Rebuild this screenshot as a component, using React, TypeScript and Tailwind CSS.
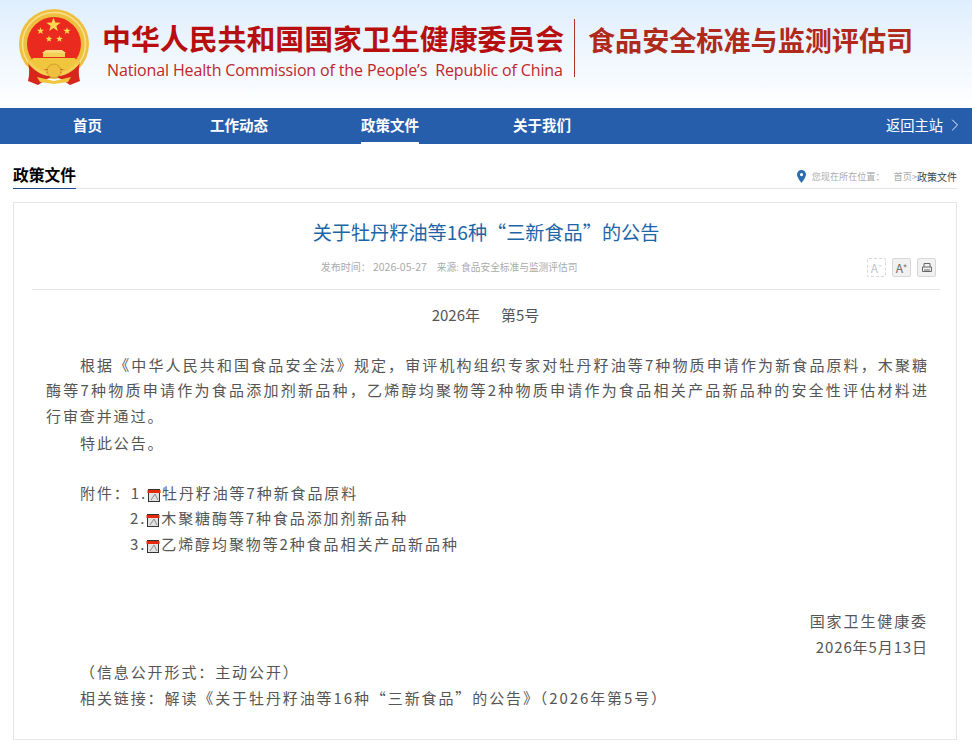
import { ChevronRight } from 'lucide-react'

const cjk = '[font-family:"Noto_Sans_CJK_SC","Liberation_Sans",sans-serif]'

const navItems = [
  { label: '首页', className: 'w-[29px]' },
  { label: '工作动态', className: 'ml-[108px] w-[58px]' },
  { label: '政策文件', className: 'ml-[93px] w-[58px]', active: true },
  { label: '关于我们', className: 'ml-[94px] w-[58px]' },
]

function Star({ cx, cy, r }: { cx: number; cy: number; r: number }) {
  const pts = Array.from({ length: 10 }, (_, i) => {
    const a = -Math.PI / 2 + (i * Math.PI) / 5
    const d = i % 2 === 0 ? r : r * 0.4
    return `${cx + d * Math.cos(a)},${cy + d * Math.sin(a)}`
  }).join(' ')
  return <polygon points={pts} fill="#f8d94f" />
}

// coordinates are page pixels, hence the viewBox offset
function Emblem() {
  return (
    <svg width="72" height="78" viewBox="18 9 72 78" className="shrink-0">
      <circle cx="54" cy="44" r="35" fill="#efc040" />
      <circle cx="54" cy="44" r="31.5" fill="none" stroke="#f9e08a" strokeWidth="1.5" />
      <path d="M28 62 C30 70 29 77 28 81 L38 85 L47 79 L54 76 L61 79 L70 85 L80 81 C79 77 78 70 80 62 L66 72 H42 Z" fill="#d9261c" />
      <circle cx="54" cy="44" r="27" fill="#ea2a1e" />
      <Star cx={53.5} cy={25} r={7.5} />
      <Star cx={40.5} cy={31} r={3.8} />
      <Star cx={67} cy={31} r={3.8} />
      <Star cx={49} cy={39} r={3.5} />
      <Star cx={59.5} cy={39} r={3.5} />
      <path d="M46 50 H62 L66 53 H42 Z" fill="#f6dc7c" />
      <path d="M43 53 H65 V57 H43 Z" fill="#f3cf55" />
      <path d="M33 58 H75 L78 63 L70 69 H38 L30 63 Z" fill="#f0c63f" />
      <path d="M29 62 C37 72 46 75 54 75 C62 75 71 72 79 62" fill="none" stroke="#f4cf52" strokeWidth="3" />
      <circle cx="54" cy="71" r="7" fill="#efc040" stroke="#b98a1d" strokeWidth="0.6" />
      <path d="M37 77 L54 81 L71 77 L68 82 L54 84 L40 82 Z" fill="#f0c63f" />
    </svg>
  )
}

function PdfIcon() {
  return (
    <svg width="14" height="14" viewBox="0 0 14 14" className="mr-px inline-block align-[-3px]">
      <rect x="1.5" y="1.5" width="11" height="12" fill="#e2e2e2" stroke="#333" strokeWidth="1" />
      <path d="M4 12 L8 6 L11 12" fill="none" stroke="#8d8d8d" strokeWidth="1" />
      <rect x="0.5" y="2" width="13" height="3" fill="#e32a0c" />
    </svg>
  )
}

function ToolButton({ children, dashed }: { children: React.ReactNode; dashed?: boolean }) {
  return (
    <span
      className={`flex h-[19px] w-[19px] items-center justify-center rounded-[2px] border text-[12px] ${
        dashed ? 'border-dashed border-[#d8d8d8] bg-white text-[#c4c4c4]' : 'border-[#d8d8d8] bg-[#f1f1f1] text-[#666]'
      }`}
    >
      {children}
    </span>
  )
}

function Header() {
  return (
    <header className="flex h-[108px] items-start bg-gradient-to-b from-[#dfeefd] to-white pl-[18px]">
      <div className="mt-[9px]">
        <Emblem />
      </div>
      <div className="ml-[12px] mt-[19px] flex w-[462px] flex-col">
        <div className="whitespace-nowrap text-[28.9px] font-bold leading-[36px] text-[#b70f0f]">
          中华人民共和国国家卫生健康委员会
        </div>
        <div className="mt-[5px] whitespace-nowrap pl-[5px] text-[16px] leading-[20px] tracking-[-0.14px] text-[#c0252a] [font-family:'Open_Sans',sans-serif]">
          National Health Commission of the People’s&nbsp; Republic of China
        </div>
      </div>
      <div className="ml-[10px] mt-[19px] h-[58px] w-px bg-[#b3312b]" />
      <div className="ml-[13px] mt-[22px] whitespace-nowrap text-[27.1px] font-bold leading-[36px] text-[#b02a1c]">
        食品安全标准与监测评估司
      </div>
    </header>
  )
}

function Nav() {
  return (
    <nav className="flex h-9 items-stretch bg-[#275eac] pl-[73px] pr-[7px] text-white">
      <div className="flex">
        {navItems.map((item) => (
          <span
            key={item.label}
            className={`flex ${item.className} items-center justify-center whitespace-nowrap border-b-2 text-[14.5px] font-bold ${
              item.active ? 'border-white' : 'border-transparent'
            }`}
          >
            {item.label}
          </span>
        ))}
      </div>
      <div className="ml-auto flex items-center gap-[2px] pb-[2px] text-[14.25px]">
        返回主站
        <ChevronRight size={20} strokeWidth={1.1} />
      </div>
    </nav>
  )
}

export default function App() {
  return (
    <div className={`h-[750px] w-[972px] overflow-hidden bg-white ${cjk}`}>
      <Header />
      <Nav />
      <main className="pl-[13px] pr-[15px]">
        <div className="flex h-[45px] items-end justify-between border-b border-[#e2e2e2]">
          <div className="-mb-px border-b border-[#1a4d92] pb-[1px] text-[15.75px] font-bold leading-[24px] text-black">
            政策文件
          </div>
          <div className="mb-[4px] flex items-center text-[10px] text-[#aaa]">
            <svg width="9" height="13" viewBox="0 0 9 13" className="mr-[6px]">
              <path
                fillRule="evenodd"
                d="M4.5 0C2 0 0 2 0 4.5C0 7.5 4.5 13 4.5 13S9 7.5 9 4.5C9 2 7 0 4.5 0ZM4.5 3A1.6 1.6 0 1 1 4.5 6.2A1.6 1.6 0 1 1 4.5 3Z"
                fill="#2a6eb0"
              />
            </svg>
            <span className="mr-[9px] text-[9.1px]">您现在所在位置：</span>
            <span className="text-[9.2px]">首页&gt;</span>
            <span className="text-[#444]">政策文件</span>
          </div>
        </div>
        <article className="mt-[13px] h-[538px] border border-[#e6e6e6] pl-[18px] pr-[16px]">
          <h1 className="mt-[14px] text-center text-[19.15px] font-normal leading-[30px] text-[#1c66a8]">
            关于牡丹籽油等16种“三新食品”的公告
          </h1>
          <div className="relative mt-[9px] flex h-[22px] items-center justify-center gap-[10px] pr-[74px] text-[10px] text-[#aaa]">
            <span>
              发布时间：&nbsp;<span className="text-[10.5px]">2026-05-27</span>
            </span>
            <span className="text-[9.7px]">来源: 食品安全标准与监测评估司</span>
            <div className="absolute right-[4px] top-[2px] flex gap-[6px]">
              <ToolButton dashed>A⁻</ToolButton>
              <ToolButton>A⁺</ToolButton>
              <ToolButton>
                <svg width="12" height="12" viewBox="0 0 12 12" fill="none" stroke="#666">
                  <path d="M3 5V1.5H9V5M1.5 5H10.5V9.5H1.5ZM3 8H9" />
                </svg>
              </ToolButton>
            </div>
          </div>
          <div className="mt-[11px] border-t border-[#e6e6e6] pt-[12px] text-[15px] leading-[25.5px] tracking-[1.9px] text-[#555]">
            <p className="flex justify-center gap-[21px] pr-[1px] tracking-normal">
              <span>2026年</span>
              <span>第5号</span>
            </p>
            <p className="mt-[24px] pl-[14px] pr-[11px]">
              <span className="block indent-[34px] [text-align-last:justify]">
                根据《中华人民共和国食品安全法》规定，审评机构组织专家对牡丹籽油等7种物质申请作为新食品原料，木聚糖
              </span>
              <span className="block [text-align-last:justify]">
                酶等7种物质申请作为食品添加剂新品种，乙烯醇均聚物等2种物质申请作为食品相关产品新品种的安全性评估材料进
              </span>
              <span className="block">行审查并通过。</span>
            </p>
            <p className="mt-[2px] pl-[48px]">特此公告。</p>
            <div className="mt-[24px] pl-[48px]">
              <p>
                附件：1.<PdfIcon />牡丹籽油等7种新食品原料
              </p>
              <p className="pl-[50px]">
                2.<PdfIcon />木聚糖酶等7种食品添加剂新品种
              </p>
              <p className="pl-[50px]">
                3.<PdfIcon />乙烯醇均聚物等2种食品相关产品新品种
              </p>
            </div>
            <div className="mt-[52px] pr-[12px] text-right">
              <p>国家卫生健康委</p>
              <p className="tracking-[0.9px]">2026年5月13日</p>
            </div>
            <p className="pl-[48px]">（信息公开形式：主动公开）</p>
            <p className="pl-[48px]">相关链接：解读《关于牡丹籽油等16种“三新食品”的公告》（2026年第5号）</p>
          </div>
        </article>
      </main>
    </div>
  )
}
